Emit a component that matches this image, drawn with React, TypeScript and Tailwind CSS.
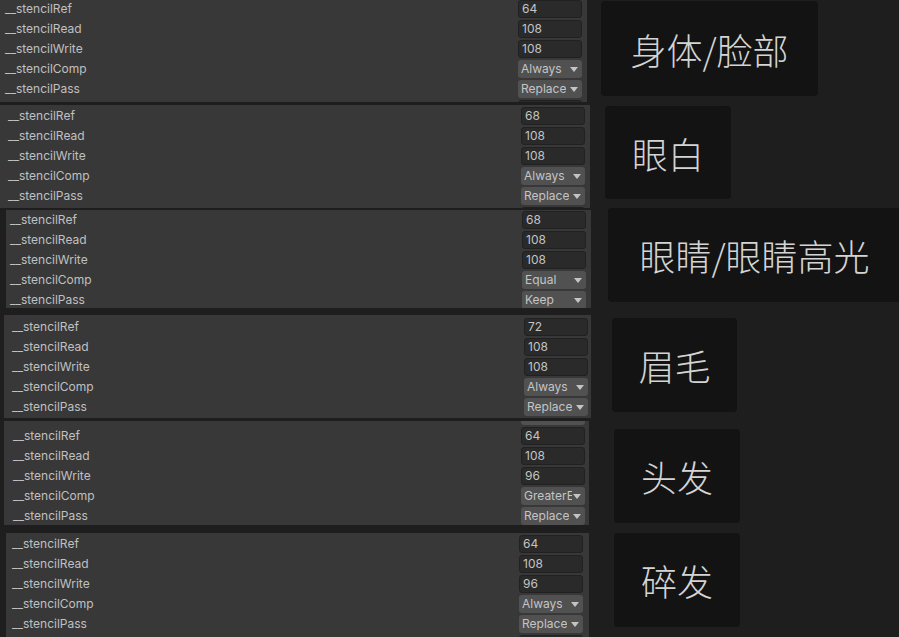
import React from "react";

type Section = {
  sectionClass: string;
  panelClass: string;
  rowsClass: string;
  labelPad: string;
  fieldPad: string;
  boxClass: string;
  title: string;
  values: string[];
  extraTop?: boolean;
};

const LABELS = [
  "__stencilRef",
  "__stencilRead",
  "__stencilWrite",
  "__stencilComp",
  "__stencilPass",
];

const sections: Section[] = [
  {
    sectionClass: "mt-0 h-[102px]",
    panelClass: "ml-0 w-[587px] h-[102px]",
    rowsClass: "-mt-[1px]",
    labelPad: "pl-[5px]",
    fieldPad: "pr-[5px]",
    boxClass: "mt-[1px] ml-[14px] w-[217px] h-[95px]",
    title: "身体/脸部",
    values: ["64", "108", "108", "Always", "Replace"],
  },
  {
    sectionClass: "mt-[3px] h-[103px]",
    panelClass: "ml-0 w-[590px] h-[103px]",
    rowsClass: "mt-[1px]",
    labelPad: "pl-[8px]",
    fieldPad: "pr-[5px]",
    boxClass: "mt-[1px] ml-[15px] w-[126px] h-[93px]",
    title: "眼白",
    values: ["68", "108", "108", "Always", "Replace"],
  },
  {
    sectionClass: "mt-0 h-[100px]",
    panelClass: "mt-[2px] ml-[6px] w-[585px] h-[98px]",
    rowsClass: "mt-0",
    labelPad: "pl-[4px]",
    fieldPad: "pr-[5px]",
    boxClass: "mt-0 ml-[17px] w-[293px] h-[94px]",
    title: "眼睛/眼睛高光",
    values: ["68", "108", "108", "Equal", "Keep"],
  },
  {
    sectionClass: "mt-[7px] h-[103px]",
    panelClass: "ml-[4px] w-[587px] h-[103px]",
    rowsClass: "mt-[2px]",
    labelPad: "pl-[8px]",
    fieldPad: "pr-[3px]",
    boxClass: "mt-[3px] ml-[21px] w-[125px] h-[94px]",
    title: "眉毛",
    values: ["72", "108", "108", "Always", "Replace"],
  },
  {
    sectionClass: "mt-[3px] h-[104px]",
    panelClass: "ml-[4px] w-[585px] h-[104px]",
    rowsClass: "-mt-[15px]",
    labelPad: "pl-[9px]",
    fieldPad: "pr-[4px]",
    boxClass: "mt-[8px] ml-[25px] w-[126px] h-[94px]",
    title: "头发",
    values: ["64", "108", "96", "GreaterEqual", "Replace"],
    extraTop: true,
  },
  {
    sectionClass: "mt-[8px] h-[104px]",
    panelClass: "ml-[6px] w-[583px] h-[104px]",
    rowsClass: "mt-[1px]",
    labelPad: "pl-[6px]",
    fieldPad: "pr-[6px]",
    boxClass: "mt-0 ml-[25px] w-[126px] h-[94px]",
    title: "碎发",
    values: ["64", "108", "96", "Always", "Replace"],
  },
];

const Arrow = () => (
  <svg width="8" height="5" viewBox="0 0 8 5" className="shrink-0">
    <path d="M0 0 L8 0 L4 5 Z" fill="#c4c4c4" />
  </svg>
);

const NumberField = ({ value }: { value: string }) => (
  <div className="w-[64px] h-[18px] rounded-[3px] border border-[#212121] bg-[#2a2a2a] pl-[3px] text-[12px] leading-[16px] text-[#c4c4c4]">
    {value}
  </div>
);

const Dropdown = ({ value }: { value: string }) => (
  <div className="w-[64px] h-[18px] rounded-[3px] bg-[#515151] pl-[3px] pr-[4px] flex items-center justify-between gap-[1px]">
    <span className="overflow-hidden whitespace-nowrap text-[12px] leading-[16px] text-[#c4c4c4]">
      {value}
    </span>
    <Arrow />
  </div>
);

const Row = ({
  label,
  value,
  kind,
  labelPad,
  fieldPad,
}: {
  label: string;
  value: string;
  kind: "number" | "enum" | "blank";
  labelPad: string;
  fieldPad: string;
}) => (
  <div className={`h-[20px] flex items-center justify-between ${fieldPad}`}>
    <span className={`${labelPad} text-[12px] text-[#c0c0c0]`}>{label}</span>
    {kind === "enum" ? <Dropdown value={value} /> : <NumberField value={value} />}
  </div>
);

const Panel = ({ s }: { s: Section }) => (
  <div className={`${s.panelClass} shrink-0 overflow-hidden bg-[#383838]`}>
    <div className={s.rowsClass}>
      {s.extraTop && (
        <Row label="" value="" kind="enum" labelPad={s.labelPad} fieldPad={s.fieldPad} />
      )}
      {LABELS.map((label, i) => (
        <Row
          key={label}
          label={label}
          value={s.values[i]}
          kind={i >= 3 ? "enum" : "number"}
          labelPad={s.labelPad}
          fieldPad={s.fieldPad}
        />
      ))}
      <Row label="" value="" kind="blank" labelPad={s.labelPad} fieldPad={s.fieldPad} />
    </div>
  </div>
);

export default function App() {
  return (
    <div
      className="w-[899px] h-[637px] overflow-hidden bg-[#1e1e1e] flex flex-col"
      style={{ fontFamily: "Inter, 'Noto Sans', sans-serif" }}
    >
      {sections.map((s) => (
        <div key={s.title} className={`${s.sectionClass} shrink-0 flex items-start`}>
          <Panel s={s} />
          <div
            className={`${s.boxClass} shrink-0 rounded-[4px] bg-[#131313] flex items-center justify-center whitespace-nowrap text-[36px] font-extralight text-[#d4d4d4]`}
            style={{ fontFamily: "'Noto Sans CJK SC', sans-serif" }}
          >
            {s.title}
          </div>
        </div>
      ))}
    </div>
  );
}
